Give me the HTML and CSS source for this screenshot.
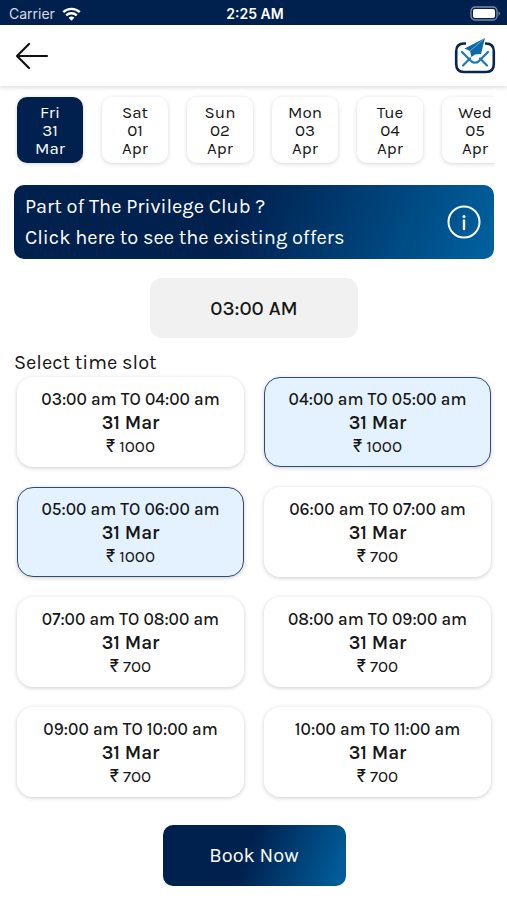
FILE: index.html
```html
<!DOCTYPE html>
<html lang="en">
<head>
    <meta charset="UTF-8">
    <meta name="viewport" content="width=device-width, initial-scale=1.0">
    <title>Select Time Slot</title>
    <link rel="stylesheet" href="styles.css">
</head>
<body>

    <div class="status-bar">
        <div class="carrier">
            <span>Carrier</span>
            <svg width="19" height="14" viewBox="0 0 19 14" fill="none" stroke="#fff" stroke-width="2.4">
                <path d="M1.2 5.2a12 12 0 0 1 16.6 0"/>
                <path d="M4.2 8.4a7.6 7.6 0 0 1 10.6 0"/>
                <path d="M9.5 13.8L6.6 10.8a4.2 4.2 0 0 1 5.8 0z" fill="#fff" stroke="none"/>
            </svg>
        </div>
        <span class="clock">2:25 AM</span>
        <div class="battery">
            <svg width="31" height="15" viewBox="0 0 31 15">
                <rect x="1" y="1" width="26" height="13" rx="4" fill="none" stroke="#7d8ba5" stroke-width="1.3"/>
                <rect x="3" y="3" width="22" height="9" rx="2" fill="#fff"/>
                <path d="M28.5 5.2a2.6 2.6 0 0 1 0 4.6z" fill="#7d8ba5"/>
            </svg>
        </div>
    </div>

    <header class="header">
        <button class="icon-btn" aria-label="Back">
            <svg width="34" height="28" viewBox="0 0 34 28" fill="none" stroke="#111" stroke-width="2.2" stroke-linecap="round" stroke-linejoin="round">
                <path d="M14 2L2 14L14 26M2 14H32"/>
            </svg>
        </button>
        <button class="icon-btn" aria-label="Messages">
            <svg width="42" height="38" viewBox="0 0 42 38" fill="none">
                <path d="M12 6.5H10Q2.2 6.5 2.2 14.5V27Q2.2 35 10 35H32Q39.8 35 39.8 27V14.5Q39.8 6.5 32 6.5H31" stroke="#0a2450" stroke-width="2.6"/>
                <path d="M8 15L17.5 24.5Q21 27 24.5 24.5L34 15M9 28.5L16 21.5M33 28.5L26 21.5" stroke="#1a78b4" stroke-width="2.2" stroke-linecap="round"/>
                <path d="M31 1L10.5 11.5L16 14L17.5 20L21 17.5L27 17Z" fill="#0b6aa8"/>
                <path d="M31 1L16 14" stroke="#8fc0e0" stroke-width="0.7"/>
            </svg>
        </button>
    </header>

    <main class="container">
        <div class="days">
            <button class="day-btn active">Fri<br>31<br>Mar</button>
            <button class="day-btn">Sat<br>01<br>Apr</button>
            <button class="day-btn">Sun<br>02<br>Apr</button>
            <button class="day-btn">Mon<br>03<br>Apr</button>
            <button class="day-btn">Tue<br>04<br>Apr</button>
            <button class="day-btn">Wed<br>05<br>Apr</button>
        </div>

        <button class="offer-banner">
            <span>Part of The Privilege Club ?<br>Click here to see the existing offers</span>
            <svg width="34" height="34" viewBox="0 0 34 34" fill="none" stroke="#fff" stroke-width="2">
                <circle cx="17" cy="17" r="15.5"/>
                <circle cx="17" cy="11.5" r="1.5" fill="#fff" stroke="none"/>
                <path d="M17 15.5V24" stroke-width="2.4" stroke-linecap="round"/>
            </svg>
        </button>

        <button class="time-btn">03:00 AM</button>

        <h2>Select time slot</h2>

        <div class="slots">
            <button class="slot">
                <span class="slot-time">03:00 am TO 04:00 am</span>
                <span class="slot-date">31 Mar</span>
                <span class="slot-price">₹ 1000</span>
            </button>
            <button class="slot selected">
                <span class="slot-time">04:00 am TO 05:00 am</span>
                <span class="slot-date">31 Mar</span>
                <span class="slot-price">₹ 1000</span>
            </button>
            <button class="slot selected">
                <span class="slot-time">05:00 am TO 06:00 am</span>
                <span class="slot-date">31 Mar</span>
                <span class="slot-price">₹ 1000</span>
            </button>
            <button class="slot">
                <span class="slot-time">06:00 am TO 07:00 am</span>
                <span class="slot-date">31 Mar</span>
                <span class="slot-price">₹ 700</span>
            </button>
            <button class="slot">
                <span class="slot-time">07:00 am TO 08:00 am</span>
                <span class="slot-date">31 Mar</span>
                <span class="slot-price">₹ 700</span>
            </button>
            <button class="slot">
                <span class="slot-time">08:00 am TO 09:00 am</span>
                <span class="slot-date">31 Mar</span>
                <span class="slot-price">₹ 700</span>
            </button>
            <button class="slot">
                <span class="slot-time">09:00 am TO 10:00 am</span>
                <span class="slot-date">31 Mar</span>
                <span class="slot-price">₹ 700</span>
            </button>
            <button class="slot">
                <span class="slot-time">10:00 am TO 11:00 am</span>
                <span class="slot-date">31 Mar</span>
                <span class="slot-price">₹ 700</span>
            </button>
        </div>

        <button class="book-btn">Book Now</button>
    </main>

    <script>
        // Only one day can be active
        const dayButtons = document.querySelectorAll('.day-btn');
        dayButtons.forEach(btn => btn.addEventListener('click', () => {
            dayButtons.forEach(b => b.classList.remove('active'));
            btn.classList.add('active');
        }));

        // Several slots can be selected
        document.querySelectorAll('.slot').forEach(slot => {
            slot.addEventListener('click', () => slot.classList.toggle('selected'));
        });
    </script>
</body>
</html>
```
FILE: styles.css
```css
/* General Styles */
* {
    box-sizing: border-box;
}

body {
    font-family: Karla, Inter, sans-serif;
    margin: 0;
    background-color: #fff;
    color: #161616;
}

button {
    font-family: inherit;
    color: inherit;
    border: none;
    padding: 0;
    cursor: pointer;
}

svg {
    display: block;
}

/* Status bar */
.status-bar {
    display: grid;
    grid-template-columns: 1fr auto 1fr;
    align-items: center;
    height: 25px;
    padding: 2px 6px 0 9px;
    background-color: #00204e;
    color: #fff;
    font-family: Inter, sans-serif;
    font-size: 14px;
}

.carrier {
    display: flex;
    align-items: center;
    gap: 7px;
    color: #d5dbe6;
}

.clock {
    font-weight: 600;
}

.battery {
    justify-self: end;
}

/* Header */
.header {
    display: flex;
    justify-content: space-between;
    align-items: center;
    height: 61px;
    padding: 0 11px 0 15px;
    box-shadow: 0 2px 4px rgba(0, 0, 0, 0.12);
}

.icon-btn {
    background: none;
}

.container {
    display: flex;
    flex-direction: column;
    padding: 0 13px 14px 14px;
}

/* Days */
.days {
    display: flex;
    gap: 19px;
    padding: 11px 3px 10px;
    overflow-x: auto;
    scrollbar-width: none;
}

.day-btn {
    flex: none;
    width: 66px;
    height: 66px;
    border-radius: 10px;
    background-color: #fff;
    font-size: 17px;
    line-height: 18px;
    box-shadow: 0 1px 4px rgba(0, 0, 0, 0.16);
}

.day-btn.active {
    background-color: #00204e;
    color: #fff;
}

.offer-banner {
    display: flex;
    justify-content: space-between;
    align-items: center;
    margin-top: 12px;
    padding: 6px 13px 6px 11px;
    border-radius: 10px;
    background: linear-gradient(110deg, #00204e 45%, #0062a0);
    color: #fff;
    font-size: 20px;
    line-height: 31px;
    text-align: left;
}

.time-btn {
    align-self: center;
    width: 208px;
    height: 60px;
    margin-top: 19px;
    border-radius: 12px;
    background-color: #f1f1f1;
    font-size: 20px;
    font-weight: 500;
}

h2 {
    margin: 13px 0 2px;
    font-size: 20px;
    font-weight: 400;
    line-height: 24px;
}

/* Time slots */
.slots {
    display: grid;
    grid-template-columns: 1fr 1fr;
    gap: 20px;
    padding: 0 3px;
}

.slot {
    display: flex;
    flex-direction: column;
    align-items: center;
    justify-content: center;
    height: 90px;
    border: 1px solid transparent;
    border-radius: 16px;
    background-color: #fff;
    box-shadow: 0 1px 4px rgba(0, 0, 0, 0.2);
}

.slot.selected {
    border-color: #2f4a78;
    background-color: #e3f2fe;
}

.slot-time {
    font-size: 17px;
    font-weight: 500;
    line-height: 24px;
}

.slot-date {
    font-size: 19px;
    font-weight: 600;
    line-height: 24px;
}

.slot-price {
    font-size: 17px;
    line-height: 22px;
}

.book-btn {
    align-self: center;
    width: 183px;
    height: 61px;
    margin-top: 28px;
    border-radius: 10px;
    background: linear-gradient(110deg, #00204e 45%, #0062a0);
    color: #fff;
    font-size: 20px;
}
```
